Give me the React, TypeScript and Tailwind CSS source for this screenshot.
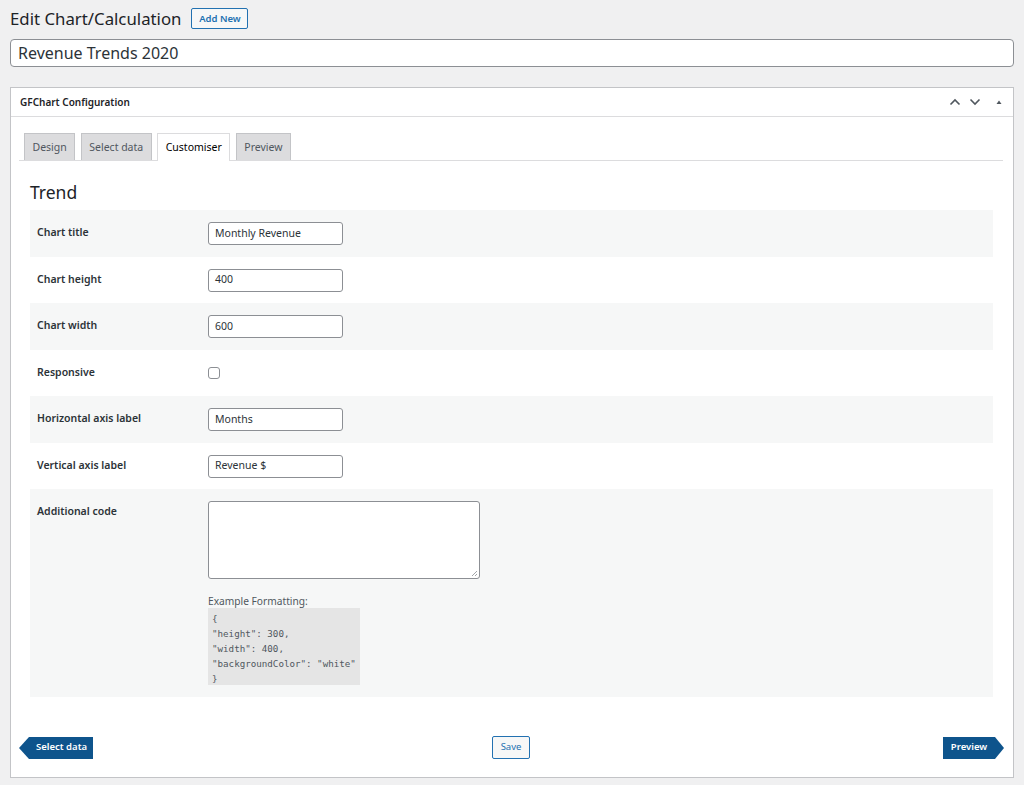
import React from "react";

const font = { fontFamily: '"Noto Sans", "Open Sans", sans-serif' };

function Row({ label, gray, children, tall }: { label: string; gray?: boolean; children: React.ReactNode; tall?: boolean }) {
  return (
    <div className={`flex ${gray ? "bg-[#f6f7f7]" : "bg-white"} ${tall ? "h-[208px]" : "h-[46.5px]"}`}>
      <div className="w-[178px] pl-[7px] pt-[14px] text-[10.5px] font-semibold text-[#2c3338] leading-[16px]">{label}</div>
      <div className="pt-[12px]">{children}</div>
    </div>
  );
}

function TextInput({ value }: { value: string }) {
  return (
    <div className="w-[135px] h-[23px] border border-[#8c8f94] rounded-[3px] bg-white px-[6px] flex items-center text-[10.5px] text-[#2c3338]">
      {value}
    </div>
  );
}

function Tab({ label, active }: { label: string; active?: boolean }) {
  return active ? (
    <div className="h-[28px] -mb-px px-[7.5px] pt-[1px] bg-white border border-[#dcdcde] border-b-0 flex items-center text-[10.5px] text-[#000]">{label}</div>
  ) : (
    <div className="h-[27px] px-[7.5px] pt-[1px] bg-[#dcdcde] border border-[#c3c4c7] border-b-0 flex items-center text-[10.5px] text-[#50575e]">{label}</div>
  );
}

export default function App() {
  return (
    <div className="min-h-[785px] bg-[#f0f0f1] pt-[7px]" style={font}>
      <div className="flex items-center px-[10px] h-[23px]">
        <h1 className="text-[16.8px] text-[#1d2327] leading-[23px]">Edit Chart/Calculation</h1>
        <button className="ml-[10px] h-[21px] w-[57px] border border-[#2271b1] rounded-[2px] bg-[#f6f7f7] text-[#2271b1] text-[9.5px] font-semibold leading-[19px]">
          Add New
        </button>
      </div>
      <div className="mx-[10px] mt-[9px] h-[28px] border border-[#8c8f94] rounded-[4px] bg-white px-[7px] flex items-center text-[16px] text-[#2c3338]">
        Revenue Trends 2020
      </div>

      <div className="mx-[10px] mt-[20px] h-[691px] border border-[#c3c4c7] bg-white">
        <div className="h-[29px] border-b border-[#dcdcde] flex items-center pl-[9px] pr-[7px]">
          <span className="text-[10px] font-semibold text-[#1d2327]">GFChart Configuration</span>
          <div className="ml-auto flex items-center gap-[6px] text-[#50575e]">
            <svg width="14" height="14" viewBox="0 0 14 14" fill="none" stroke="#50575e" strokeWidth="1.6">
              <path d="M2.5 9.5 L7 5 L11.5 9.5" />
            </svg>
            <svg width="14" height="14" viewBox="0 0 14 14" fill="none" stroke="#50575e" strokeWidth="1.6">
              <path d="M2.5 4.5 L7 9 L11.5 4.5" />
            </svg>
            <svg width="14" height="14" viewBox="0 0 14 14" className="ml-[4px]">
              <path d="M4.5 9 L7 5.5 L9.5 9 Z" fill="#50575e" />
            </svg>
          </div>
        </div>

        <div className="pl-[8px] pr-[10px] pt-[16px]">
          <div className="flex items-end gap-[5.5px] pl-[5px] border-b border-[#dcdcde] h-[28px]">
            <Tab label="Design" />
            <Tab label="Select data" />
            <Tab label="Customiser" active />
            <Tab label="Preview" />
          </div>

          <div className="pl-[11px] pr-[10px]">
            <h2 className="mt-[19px] text-[17.5px] leading-[24px] text-[#1d2327]">Trend</h2>
            <div className="mt-[6px]">
              <Row label="Chart title" gray><TextInput value="Monthly Revenue" /></Row>
              <Row label="Chart height"><TextInput value="400" /></Row>
              <Row label="Chart width" gray><TextInput value="600" /></Row>
              <Row label="Responsive">
                <div className="mt-[5px] w-[12px] h-[12px] border border-[#8c8f94] rounded-[3px] bg-white" />
              </Row>
              <Row label="Horizontal axis label" gray><TextInput value="Months" /></Row>
              <Row label="Vertical axis label"><TextInput value="Revenue $" /></Row>
              <Row label="Additional code" gray tall>
                <div className="relative w-[272px] h-[78px] border border-[#8c8f94] rounded-[3px] bg-white">
                  <svg className="absolute right-[1px] bottom-[1px]" width="8" height="8" viewBox="0 0 8 8" stroke="#8c8f94" strokeWidth="0.8">
                    <path d="M7 2 L2 7 M7 5 L5 7" />
                  </svg>
                </div>
                <div className="mt-[15px] text-[10.2px] text-[#50575e] leading-[14px]">Example Formatting:</div>
                <pre
                  className="w-[152px] h-[77px] bg-[#e5e5e5] px-[4px] pt-[3px] text-[9.2px] leading-[15px] text-[#50575e]"
                  style={{ fontFamily: '"DejaVu Sans Mono", "Liberation Mono", monospace' }}
                >
{`{
"height": 300,
"width": 400,
"backgroundColor": "white"
}`}
                </pre>
              </Row>
            </div>
          </div>

          <div className="mt-[39px] flex items-center justify-between">
            <div className="flex items-center">
              <svg width="10" height="22" viewBox="0 0 10 22"><path d="M10 0 L0 11 L10 22 Z" fill="#0e548c" /></svg>
              <div className="h-[22px] w-[64px] bg-[#0e548c] flex items-center pl-[7px] text-[9.5px] font-semibold text-white">Select data</div>
            </div>
            <button className="h-[23px] w-[38px] border border-[#2271b1] rounded-[2px] bg-[#f6f7f7] text-[#2271b1] text-[9.5px] ml-[-14px]">Save</button>
            <div className="flex items-center mr-[-1px]">
              <div className="h-[22px] w-[52px] bg-[#0e548c] flex items-center justify-center text-[9.5px] font-semibold text-white">Preview</div>
              <svg width="9" height="22" viewBox="0 0 9 22"><path d="M0 0 L9 11 L0 22 Z" fill="#0e548c" /></svg>
            </div>
          </div>
        </div>
      </div>
    </div>
  );
}
